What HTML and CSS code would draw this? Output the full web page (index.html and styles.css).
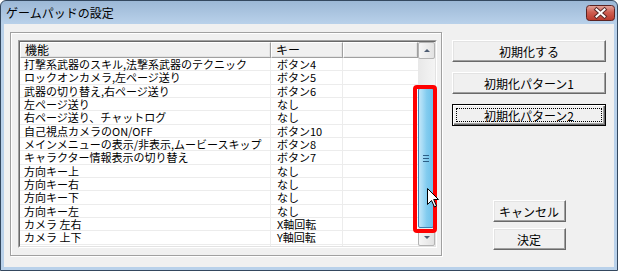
FILE: index.html
```
<!DOCTYPE html>
<html lang="ja">
<head>
    <meta charset="UTF-8">
    <title>ゲームパッドの設定</title>
    <link rel="stylesheet" href="styles.css">
</head>
<body>
    <div class="window">
        <div class="titlebar">
            <span class="title">ゲームパッドの設定</span>
            <span class="close-btn">
                <svg width="29" height="16" viewBox="0 0 29 16">
                    <defs>
                        <linearGradient id="cg" x1="0" y1="0" x2="0" y2="1">
                            <stop offset="0" stop-color="#e3a79e"/>
                            <stop offset="0.45" stop-color="#cf5f52"/>
                            <stop offset="1" stop-color="#b9382b"/>
                        </linearGradient>
                    </defs>
                    <rect x="0.5" y="0.5" width="28" height="15" rx="3" fill="url(#cg)" stroke="#5a2322"/>
                    <path d="M10.5 4.5 L18.5 11.5 M18.5 4.5 L10.5 11.5" stroke="#5a2a28" stroke-width="4" stroke-linecap="square"/>
                    <path d="M10.5 4.5 L18.5 11.5 M18.5 4.5 L10.5 11.5" stroke="#fff" stroke-width="2" stroke-linecap="square"/>
                </svg>
            </span>
        </div>

        <div class="client">
            <!-- 設定リスト -->
            <div class="group">
                <div class="listview">
                    <div class="listview-inner">
                        <div class="list-area">
                            <div class="list-header">
                                <div class="hcell c1">機能</div>
                                <div class="hcell c2">キー</div>
                                <div class="hcell c3"></div>
                            </div>
                            <div class="list-body">
                                <div class="row"><span class="c1">打撃系武器のスキル,法撃系武器のテクニック</span><span class="c2">ボタン4</span></div>
                                <div class="row"><span class="c1">ロックオンカメラ,左ページ送り</span><span class="c2">ボタン5</span></div>
                                <div class="row"><span class="c1">武器の切り替え,右ページ送り</span><span class="c2">ボタン6</span></div>
                                <div class="row"><span class="c1">左ページ送り</span><span class="c2">なし</span></div>
                                <div class="row"><span class="c1">右ページ送り、チャットログ</span><span class="c2">なし</span></div>
                                <div class="row"><span class="c1">自己視点カメラのON/OFF</span><span class="c2">ボタン10</span></div>
                                <div class="row"><span class="c1">メインメニューの表示/非表示,ムービースキップ</span><span class="c2">ボタン8</span></div>
                                <div class="row"><span class="c1">キャラクター情報表示の切り替え</span><span class="c2">ボタン7</span></div>
                                <div class="row"><span class="c1">方向キー上</span><span class="c2">なし</span></div>
                                <div class="row"><span class="c1">方向キー右</span><span class="c2">なし</span></div>
                                <div class="row"><span class="c1">方向キー下</span><span class="c2">なし</span></div>
                                <div class="row"><span class="c1">方向キー左</span><span class="c2">なし</span></div>
                                <div class="row"><span class="c1">カメラ 左右</span><span class="c2">X軸回転</span></div>
                                <div class="row"><span class="c1">カメラ 上下</span><span class="c2">Y軸回転</span></div>
                            </div>
                        </div>
                        <div class="vscroll">
                            <div class="sb-btn"><span class="arrow-up"></span></div>
                            <div class="sb-track">
                                <div class="sb-thumb"><span class="grip"></span></div>
                            </div>
                            <div class="sb-btn"><span class="arrow-down"></span></div>
                            <!-- 注目枠とカーソル -->
                            <div class="highlight"></div>
                            <svg class="cursor" width="13" height="20" viewBox="0 0 13 20">
                                <path d="M0.5 0.5 L0.5 16.5 L4.5 12.5 L7.5 19 L9.5 18 L6.7 11.5 L11.5 11.5 Z" fill="#fff" stroke="#000" stroke-width="1"/>
                            </svg>
                        </div>
                    </div>
                </div>
            </div>

            <!-- ボタン -->
            <div class="side">
                <button class="btn wide">初期化する</button>
                <button class="btn wide">初期化パターン1</button>
                <button class="btn wide default">初期化パターン2</button>
                <button class="btn small cancel">キャンセル</button>
                <button class="btn small">決定</button>
            </div>
        </div>
    </div>
</body>
</html>
```
FILE: styles.css
```
body {
    margin: 0;
    background-color: #ffffff;
    font-family: "Noto Sans CJK JP", "Noto Sans", sans-serif;
}
.window {
    position: relative;
    width: 618px;
    height: 271px;
    box-sizing: border-box;
    border: 1px solid #34485f;
    border-radius: 6px 6px 0 0;
    background: linear-gradient(#9cb8d6, #b9d1ea 23px, #b9d1ea);
    padding: 0 3px 3px 3px;
    display: flex;
    flex-direction: column;
}
.titlebar {
    height: 23px;
    display: flex;
    align-items: flex-start;
}
.title {
    margin: 4px 0 0 2px;
    font-size: 12px;
    line-height: 16px;
    color: #000;
}
.close-btn {
    margin: 4px -1px 0 auto;
    height: 16px;
}
.close-btn svg {
    display: block;
}
.client {
    flex: 1;
    display: flex;
    align-items: flex-start;
    background-color: #f0f0f0;
    padding: 8px 8px 0 6px;
}
.group {
    width: 432px;
    height: 224px;
    box-sizing: border-box;
    border: 1px solid #a0a0a0;
    box-shadow: inset 1px 1px 0 #fff, 1px 1px 0 #fff;
    padding: 7px 0 0 7px;
}
.listview {
    width: 419px;
    height: 208px;
    box-sizing: border-box;
    border: 1px solid;
    border-color: #a0a0a0 #fff #fff #a0a0a0;
}
.listview-inner {
    height: 100%;
    box-sizing: border-box;
    border: 1px solid;
    border-color: #696969 #e3e3e3 #e3e3e3 #696969;
    background-color: #fff;
    display: flex;
}
.list-area {
    width: 398px;
    display: flex;
    flex-direction: column;
    font-size: 11px;
    color: #000;
}
.list-header {
    display: flex;
    height: 16px;
}
.hcell {
    box-sizing: border-box;
    height: 16px;
    line-height: 14px;
    padding-left: 4px;
    background-color: #f0f0f0;
    border: 1px solid;
    border-color: #fff #a0a0a0 #a0a0a0 #fff;
    box-shadow: inset -1px -1px 0 #e3e3e3;
    font-size: 12px;
}
.c1 {
    width: 251px;
    flex: none;
}
.c2 {
    width: 72px;
    flex: none;
}
.c3 {
    flex: 1;
}
.list-body {
    flex: 1;
    background: linear-gradient(to right, transparent 250px, #ececec 250px, #ececec 251px, transparent 251px, transparent 322px, #ececec 322px, #ececec 323px, transparent 323px), #fff;
}
.row {
    display: flex;
    height: 13.33px;
    box-sizing: border-box;
    border-bottom: 1px solid #ececec;
    line-height: 12px;
    white-space: nowrap;
}
.row .c1 {
    padding-left: 4px;
    box-sizing: border-box;
}
.row .c2 {
    padding-left: 6px;
    box-sizing: border-box;
}
.vscroll {
    position: relative;
    width: 17px;
    display: flex;
    flex-direction: column;
    background-color: #ececec;
}
.sb-btn {
    height: 17px;
    box-sizing: border-box;
    border: 1px solid #b4b4b4;
    border-radius: 2px;
    background: linear-gradient(to right, #f6f6f6, #e2e2e2);
    display: flex;
    align-items: center;
    justify-content: center;
}
.arrow-up {
    width: 0;
    height: 0;
    border-left: 3px solid transparent;
    border-right: 3px solid transparent;
    border-bottom: 3px solid #4d5c72;
}
.arrow-down {
    width: 0;
    height: 0;
    border-left: 3px solid transparent;
    border-right: 3px solid transparent;
    border-top: 3px solid #4d5c72;
}
.sb-track {
    flex: 1;
    padding: 29px 1px 0 0;
    background: linear-gradient(to right, #e8e8e8, #f4f4f4);
}
.sb-thumb {
    height: 140px;
    box-sizing: border-box;
    border: 1px solid #3c7fb1;
    border-radius: 2px;
    background: linear-gradient(to right, #c2e6f8 0, #a6dbf5 25%, #82ccef 55%, #6cc0ea 100%);
    display: flex;
    align-items: center;
    justify-content: center;
}
.grip {
    width: 6px;
    height: 5px;
    border-top: 1px solid #2d5f86;
    border-bottom: 1px solid #2d5f86;
    background: linear-gradient(transparent 2px, #2d5f86 2px, #2d5f86 3px, transparent 3px);
}
.highlight {
    position: absolute;
    left: -5px;
    top: 43px;
    width: 24px;
    height: 148px;
    box-sizing: border-box;
    border: 4px solid #ff0000;
    border-radius: 4px;
}
.cursor {
    position: absolute;
    left: 9px;
    top: 146px;
}
.side {
    width: 154px;
    margin-left: 10px;
    padding-top: 8px;
    display: flex;
    flex-direction: column;
    align-items: center;
}
.btn {
    font-family: "Noto Sans CJK JP", "Noto Sans", sans-serif;
    font-size: 12px;
    color: #000;
    padding: 0;
    height: 22px;
    background-color: #f0f0f0;
    border: 1px solid;
    border-color: #fff #696969 #696969 #fff;
    box-shadow: inset -1px -1px 0 #a0a0a0, inset 1px 1px 0 #e3e3e3;
    border-radius: 0;
    margin-bottom: 10px;
}
.wide {
    width: 154px;
}
.default {
    border-color: #000;
    box-shadow: inset 1px 1px 0 #fff, inset -1px -1px 0 #696969, inset -2px -2px 0 #a0a0a0;
    outline: 1px dotted #000;
    outline-offset: -5px;
}
.small {
    width: 73px;
    margin-bottom: 6px;
}
.cancel {
    margin-top: 64px;
}
```
